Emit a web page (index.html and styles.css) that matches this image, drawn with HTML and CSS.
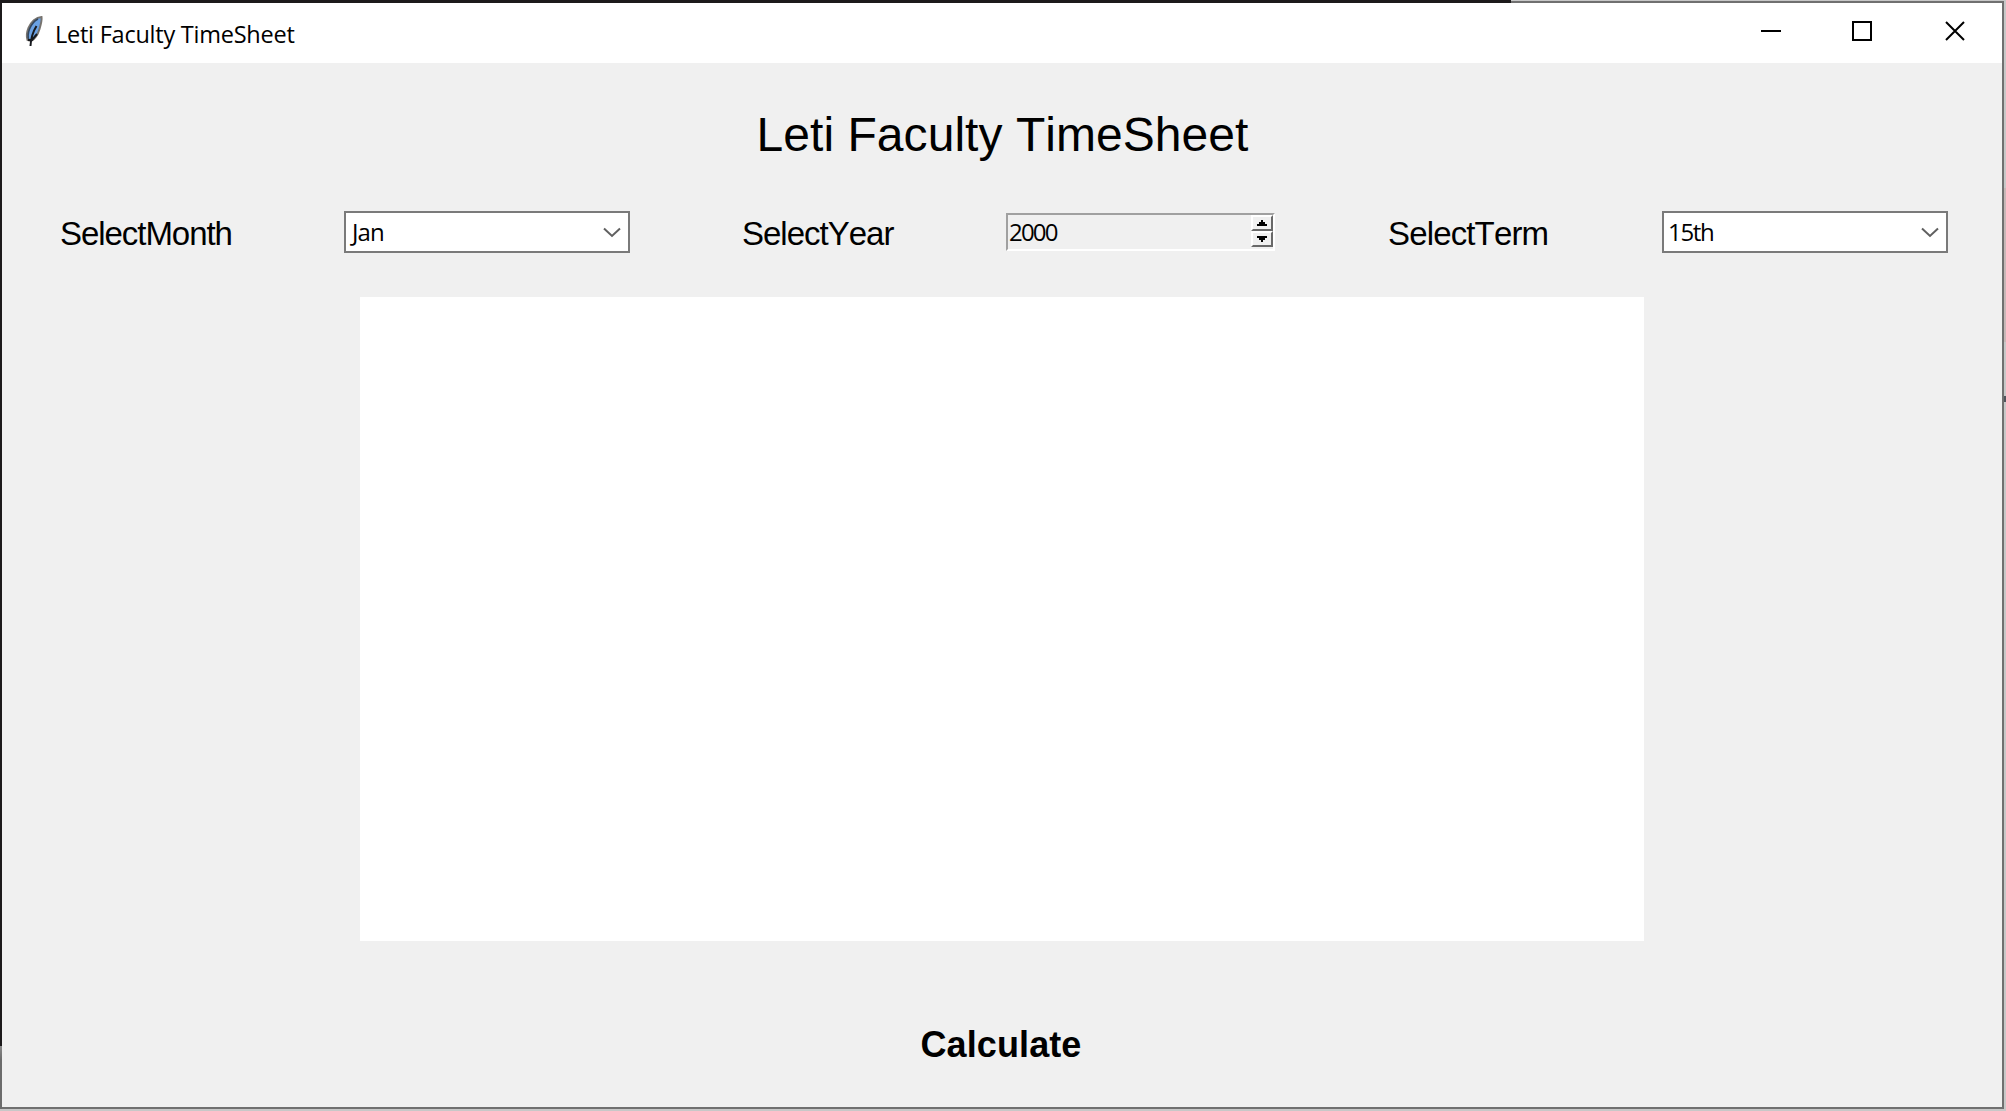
FILE: index.html
```html
<!DOCTYPE html>
<html lang="en">
<head>
<meta charset="utf-8">
<title>Leti Faculty TimeSheet</title>
<link rel="stylesheet" href="styles.css">
</head>
<body>
<div class="window">
  <header class="titlebar">
    <svg class="feather" width="20" height="34" viewBox="0 0 20 34">
      <path d="M17.5 2C12 2 7 7 4.500 13C2.500 18 2.500 22 3.500 25L7 26C11 24 14 19 15.500 14C17 9 18 5 17.500 2Z" fill="#6ba2e4" stroke="#77736e" stroke-width="2"/>
      <path d="M14 4C10 6 7.500 9 5.500 14C4 18 3.500 22 5 25" fill="none" stroke="#34475e" stroke-width="1.600"/>
      <path d="M12.500 11C10 15 7 20 6.500 31M4 25L8 25L13 19" fill="none" stroke="#16191e" stroke-width="2"/>
    </svg>
    <span class="caption">Leti Faculty TimeSheet</span>
    <svg class="controls" width="204" height="20" viewBox="0 0 204 20" fill="none" stroke="#000" stroke-width="2">
      <path d="M0 10H20M92 1H110V19H92Z"/>
      <path d="M185 1L203 19M203 1L185 19"/>
    </svg>
  </header>
  <main class="content">
    <h1 class="heading">Leti Faculty TimeSheet</h1>
    <div class="filters">
      <label class="label month">SelectMonth</label>
      <div class="combo"><span class="value jan">Jan</span>
        <svg width="18" height="11" viewBox="0 0 18 11"><path d="M1 1.500L9 9L17 1.500" fill="none" stroke="#606060" stroke-width="2"/></svg>
      </div>
      <label class="label year">SelectYear</label>
      <div class="spin"><span class="value digits">2000</span>
        <div class="steppers">
          <span class="step"><svg width="10" height="6" viewBox="0 0 10 6"><path d="M4 0H6V2H8V4H10V6H0V4H2V2H4Z"/></svg></span>
          <span class="step"><svg width="10" height="6" viewBox="0 0 10 6"><path d="M0 0H10V2H8V4H6V6H4V4H2V2H0Z"/></svg></span>
        </div>
      </div>
      <label class="label term">SelectTerm</label>
      <div class="combo"><span class="value nth">15th</span>
        <svg width="18" height="11" viewBox="0 0 18 11"><path d="M1 1.500L9 9L17 1.500" fill="none" stroke="#606060" stroke-width="2"/></svg>
      </div>
    </div>
    <div class="canvas"></div>
    <button class="calculate">Calculate</button>
  </main>
</div>
</body>
</html>
```
FILE: styles.css
```css
* { box-sizing: border-box; }
body {
  margin: 0;
  height: 1111px;
  padding: 3px 4px 4px 2px;
  overflow: hidden;
  /* window edges over the desktop behind them */
  background:
    linear-gradient(#1c1a1b, #1c1a1b) 0 0 / 1511px 3px no-repeat,
    linear-gradient(#1c1a1b 1046px, #8a8a8a 1046px, #6c6c6c 1060px) 0 0 / 2px 1109px no-repeat,
    linear-gradient(#707070, #707070) 1511px 1px / 493px 2px no-repeat,
    linear-gradient(#707070, #707070) 2002px 1px / 2px 1108px no-repeat,
    linear-gradient(#707070, #707070) 0 1107px / 2004px 2px no-repeat,
    linear-gradient(#c8c8c8 188px, #c8b8b8 188px, #c8b8b8 342px, #c8c8c8 342px, #c8c8c8 396px, #50545c 396px, #50545c 402px, #c8c8c8 402px) 2004px 0 / 2px 1111px no-repeat,
    #c8c8c8;
  font-family: "Liberation Sans", Arial, sans-serif;
  font-kerning: none;
  color: #000;
}
.window {
  height: 1104px;
  display: flex;
  flex-direction: column;
  background: #f0f0f0;
}
.titlebar {
  height: 60px;
  flex: none;
  background: #fff;
  display: flex;
  align-items: flex-start;
  padding: 0 37px 0 22px;
}
.feather { margin-top: 12px; }
.caption {
  margin: 14px 0 0 11px;
  font: 23.500px/34px "Open Sans", "Noto Sans", sans-serif;
  letter-spacing: -0.24px;
  white-space: nowrap;
}
.controls { margin: 18px 0 0 auto; }
.content {
  flex: 1;
  display: flex;
  flex-direction: column;
  align-items: center;
}
.heading {
  margin: 44px 0 0 1px;
  font-size: 48px;
  font-weight: 400;
  line-height: 56px;
  letter-spacing: 0.05px;
  white-space: nowrap;
}
.filters {
  align-self: stretch;
  display: flex;
  height: 42px;
  margin-top: 48px;
  padding-left: 58px;
}
.label {
  font-size: 33px;
  line-height: 46px;
  white-space: nowrap;
  flex: none;
}
.month { width: 284px; letter-spacing: -1.050px; }
.year { width: 265px; margin-left: 111px; padding-left: 1px; letter-spacing: -1px; }
.term { width: 275px; margin-left: 112px; padding-left: 1px; letter-spacing: -0.85px; }
.combo {
  width: 286px;
  height: 42px;
  flex: none;
  border: 2px solid #7a7a7a;
  background: #fff;
  display: flex;
  align-items: center;
  justify-content: space-between;
  padding: 0 7px 0 4px;
}
.value {
  font: 24px/34px "Open Sans", "Noto Sans", sans-serif;
  white-space: nowrap;
}
.jan { padding-left: 2px; letter-spacing: -0.9px; }
.digits { letter-spacing: -1.800px; }
.nth { letter-spacing: -1.300px; }
.spin {
  width: 269px;
  height: 38px;
  flex: none;
  margin-top: 2px;
  border: 2px solid #fff;
  border-top-color: #a0a0a0;
  border-left-color: #a0a0a0;
  display: flex;
  justify-content: space-between;
  padding-left: 1px;
}
.steppers { width: 22px; height: 32px; }
.step {
  height: 16px;
  border: 2px solid #fff;
  border-right-color: #696969;
  border-bottom-color: #696969;
  display: flex;
  align-items: center;
  justify-content: center;
}
.canvas {
  width: 1284px;
  height: 644px;
  margin-top: 44px;
  background: #fff;
}
.calculate {
  margin: 81px 2px 0 0;
  padding: 0;
  border: 0;
  background: none;
  font: bold 36px/46px "Liberation Sans", Arial, sans-serif;
  letter-spacing: 0.1px;
}
```
